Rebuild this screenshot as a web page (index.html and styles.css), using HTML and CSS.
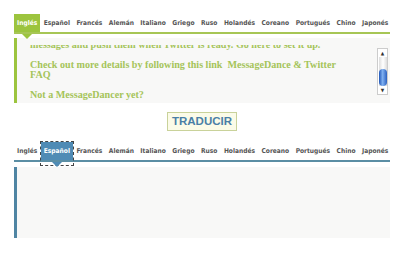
FILE: index.html
```html
<!DOCTYPE html>
<html lang="es">
<head>
  <meta charset="UTF-8">
  <title>Traducir</title>
  <link rel="stylesheet" href="styles.css">
</head>
<body>

  <div class="panel green">
    <ul class="tabs">
      <li class="active">Inglés</li>
      <li>Español</li>
      <li>Francés</li>
      <li>Alemán</li>
      <li>Italiano</li>
      <li>Griego</li>
      <li>Ruso</li>
      <li>Holandés</li>
      <li>Coreano</li>
      <li>Portugués</li>
      <li>Chino</li>
      <li>Japonés</li>
    </ul>
    <div class="box">
      <div class="text">
        <p>messages and push them when Twitter is ready. Go here to set it up.</p>
        <p>Check out more details by following this link &nbsp;MessageDance &amp; Twitter<br>FAQ</p>
        <p>Not a MessageDancer yet?</p>
      </div>
      <!-- fake aqua scrollbar -->
      <div class="scrollbar">
        <span class="arrow">&#9650;</span>
        <div class="track"><div class="thumb"></div></div>
        <span class="arrow">&#9660;</span>
      </div>
    </div>
  </div>

  <div class="action">
    <button class="translate">TRADUCIR</button>
  </div>

  <div class="panel blue">
    <ul class="tabs">
      <li>Inglés</li>
      <li class="active">Español</li>
      <li>Francés</li>
      <li>Alemán</li>
      <li>Italiano</li>
      <li>Griego</li>
      <li>Ruso</li>
      <li>Holandés</li>
      <li>Coreano</li>
      <li>Portugués</li>
      <li>Chino</li>
      <li>Japonés</li>
    </ul>
    <div class="box"></div>
  </div>

</body>
</html>
```

FILE: styles.css
```css
body {
  margin: 0;
  padding: 14px 30px 0 14px;
  background: #fff;
  font-family: "DejaVu Sans Condensed", "DejaVu Sans", sans-serif;
}
.panel {
  width: 376px;
}
.tabs {
  list-style: none;
  margin: 0;
  padding: 0;
  display: flex;
  border-bottom: 2px solid #a7c655;
}
.tabs li {
  position: relative;
  padding: 0 3px;
  height: 18px;
  line-height: 18px;
  font-size: 6.6px;
  font-weight: bold;
  color: #555;
  margin-right: 0.5px;
  white-space: nowrap;
}
.tabs li.active {
  color: #fff;
  background: #9cc43e;
}
.tabs li.active::after {
  content: "";
  position: absolute;
  left: 50%;
  top: 20px;
  margin-left: -5px;
  border-left: 5px solid transparent;
  border-right: 5px solid transparent;
  border-top: 5px solid #9cc43e;
}
.box {
  margin-top: 4px;
  height: 65px;
  box-sizing: border-box;
  padding: 7px 0 3px;
  background: #f8f8f7;
  border-left: 3px solid #9cc43e;
  display: flex;
}
.text {
  flex: 1;
  overflow: hidden;
  padding: 0 0 0 13px;
  font-family: "Liberation Serif", "Times New Roman", serif;
  font-weight: bold;
  font-size: 10.1px;
  line-height: 10px;
  color: #a5c45a;
  white-space: nowrap;
}
.text p {
  margin: 0 0 10px;
}
.text p:first-child {
  margin-top: -5px;
}
.scrollbar {
  width: 9px;
  margin: 3px 2px 5px 2px;
  background: #fff;
  border: 1px solid #ccc;
  display: flex;
  flex-direction: column;
  align-items: center;
}
.arrow {
  font-size: 5px;
  color: #333;
  line-height: 8px;
}
.track {
  flex: 1;
  width: 8px;
  background: linear-gradient(to right, #ddd, #fff, #ddd);
  display: flex;
  align-items: flex-end;
}
.thumb {
  width: 8px;
  height: 17px;
  border-radius: 4px;
  background: linear-gradient(to right, #1f56b8, #7fb0f0 45%, #2a60c0);
}
.action {
  width: 376px;
  display: flex;
  justify-content: center;
  padding: 9px 0 11px;
}
.translate {
  font-family: "Liberation Sans", Arial, sans-serif;
  font-weight: bold;
  font-size: 11.5px;
  color: #4a7fa6;
  background: #fbfbe8;
  border: 1px solid #c9d29a;
  padding: 2px 4px;
  line-height: 13px;
}
.blue .tabs {
  border-bottom-color: #5b8ea4;
}
.blue .tabs li.active {
  background: #4f8bb5;
}
.blue .tabs li.active::before {
  content: "";
  position: absolute;
  left: -1px;
  right: -1px;
  top: -1px;
  bottom: -6px;
  border: 1px dashed #444;
}
.blue .tabs li.active::after {
  border-top-color: #4f8bb5;
}
.blue .box {
  margin-top: 5px;
  height: 71px;
  border-left-color: #4f85a3;
}
```
